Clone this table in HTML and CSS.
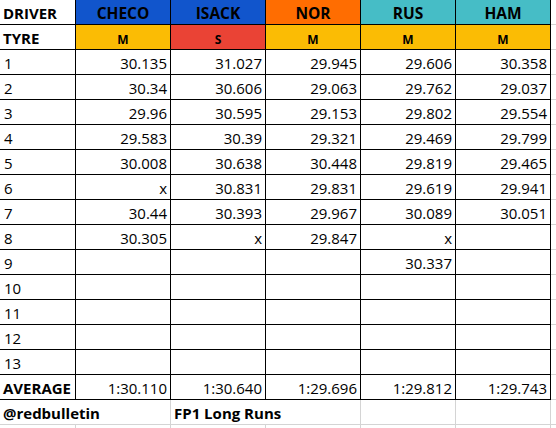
FILE: index.html
```html
<!DOCTYPE html>
<html>
<head>
<meta charset="utf-8">
<link rel="stylesheet" href="styles.css">
</head>
<body>
<div class="sheet">
  <div class="c lbl">DRIVER</div>
  <div class="c hd blue">CHECO</div>
  <div class="c hd blue">ISACK</div>
  <div class="c hd orange">NOR</div>
  <div class="c hd teal">RUS</div>
  <div class="c hd teal">HAM</div>
  <div class="f"></div>

  <div class="c lbl">TYRE</div>
  <div class="c ty yellow">M</div>
  <div class="c ty red">S</div>
  <div class="c ty yellow">M</div>
  <div class="c ty yellow">M</div>
  <div class="c ty yellow">M</div>
  <div class="f"></div>

  <div class="c n">1</div><div class="c v">30.135</div><div class="c v">31.027</div><div class="c v">29.945</div><div class="c v">29.606</div><div class="c v">30.358</div><div class="f"></div>
  <div class="c n">2</div><div class="c v">30.34</div><div class="c v">30.606</div><div class="c v">29.063</div><div class="c v">29.762</div><div class="c v">29.037</div><div class="f"></div>
  <div class="c n">3</div><div class="c v">29.96</div><div class="c v">30.595</div><div class="c v">29.153</div><div class="c v">29.802</div><div class="c v">29.554</div><div class="f"></div>
  <div class="c n">4</div><div class="c v">29.583</div><div class="c v">30.39</div><div class="c v">29.321</div><div class="c v">29.469</div><div class="c v">29.799</div><div class="f"></div>
  <div class="c n">5</div><div class="c v">30.008</div><div class="c v">30.638</div><div class="c v">30.448</div><div class="c v">29.819</div><div class="c v">29.465</div><div class="f"></div>
  <div class="c n">6</div><div class="c v">x</div><div class="c v">30.831</div><div class="c v">29.831</div><div class="c v">29.619</div><div class="c v">29.941</div><div class="f"></div>
  <div class="c n">7</div><div class="c v">30.44</div><div class="c v">30.393</div><div class="c v">29.967</div><div class="c v">30.089</div><div class="c v">30.051</div><div class="f"></div>
  <div class="c n">8</div><div class="c v">30.305</div><div class="c v">x</div><div class="c v">29.847</div><div class="c v">x</div><div class="c v"></div><div class="f"></div>
  <div class="c n">9</div><div class="c v"></div><div class="c v"></div><div class="c v"></div><div class="c v">30.337</div><div class="c v"></div><div class="f"></div>
  <div class="c n">10</div><div class="c v"></div><div class="c v"></div><div class="c v"></div><div class="c v"></div><div class="c v"></div><div class="f"></div>
  <div class="c n">11</div><div class="c v"></div><div class="c v"></div><div class="c v"></div><div class="c v"></div><div class="c v"></div><div class="f"></div>
  <div class="c n">12</div><div class="c v"></div><div class="c v"></div><div class="c v"></div><div class="c v"></div><div class="c v"></div><div class="f"></div>
  <div class="c n">13</div><div class="c v"></div><div class="c v"></div><div class="c v"></div><div class="c v"></div><div class="c v"></div><div class="f"></div>

  <div class="c lbl">AVERAGE</div><div class="c v">1:30.110</div><div class="c v">1:30.640</div><div class="c v">1:29.696</div><div class="c v">1:29.812</div><div class="c v">1:29.743</div><div class="f"></div>

  <div class="g lbl span2">@redbulletin</div>
  <div class="g lbl span2">FP1 Long Runs</div>
  <div class="g"></div>
  <div class="g"></div>
  <div class="f"></div>

  <div class="g e"></div><div class="g e"></div><div class="g e"></div><div class="g e"></div><div class="g e"></div><div class="g e"></div><div class="f"></div>
</div>
</body>
</html>
```
FILE: styles.css
```css
html, body {
  margin: 0;
  padding: 0;
  background: #ffffff;
}

.sheet {
  display: grid;
  grid-template-columns: 76px repeat(5, 95px) 5px;
  grid-auto-rows: 25px;
  font-family: "Open Sans", "Liberation Sans", sans-serif;
  font-size: 15px;
  color: #000000;
  overflow: hidden;
  height: 428px;
}

.c, .g {
  box-sizing: border-box;
  padding: 3px 4px 0 4px;
  line-height: 21px;
  white-space: nowrap;
  overflow: visible;
}

.c {
  border-right: 1px solid #000000;
  border-bottom: 1px solid #000000;
}

.g {
  border-right: 1px solid #d4d4d4;
  border-bottom: 1px solid #d4d4d4;
}

.f {
  border-bottom: 1px solid #d4d4d4;
}

.lbl {
  font-weight: 700;
  text-align: left;
  padding-left: 3px;
}

.n {
  text-align: left;
}

.v {
  text-align: right;
  padding-right: 3px;
}

.hd {
  font-weight: 700;
  text-align: center;
  font-size: 15.5px;
}

.ty {
  font-weight: 700;
  text-align: center;
  font-size: 12px;
  padding-top: 4px;
}

.span2 {
  grid-column: span 2;
}

.blue { background: #1155cc; }
.orange { background: #ff6d01; }
.teal { background: #46bdc6; }
.yellow { background: #fbbc04; }
.red { background: #ea4335; }
```
